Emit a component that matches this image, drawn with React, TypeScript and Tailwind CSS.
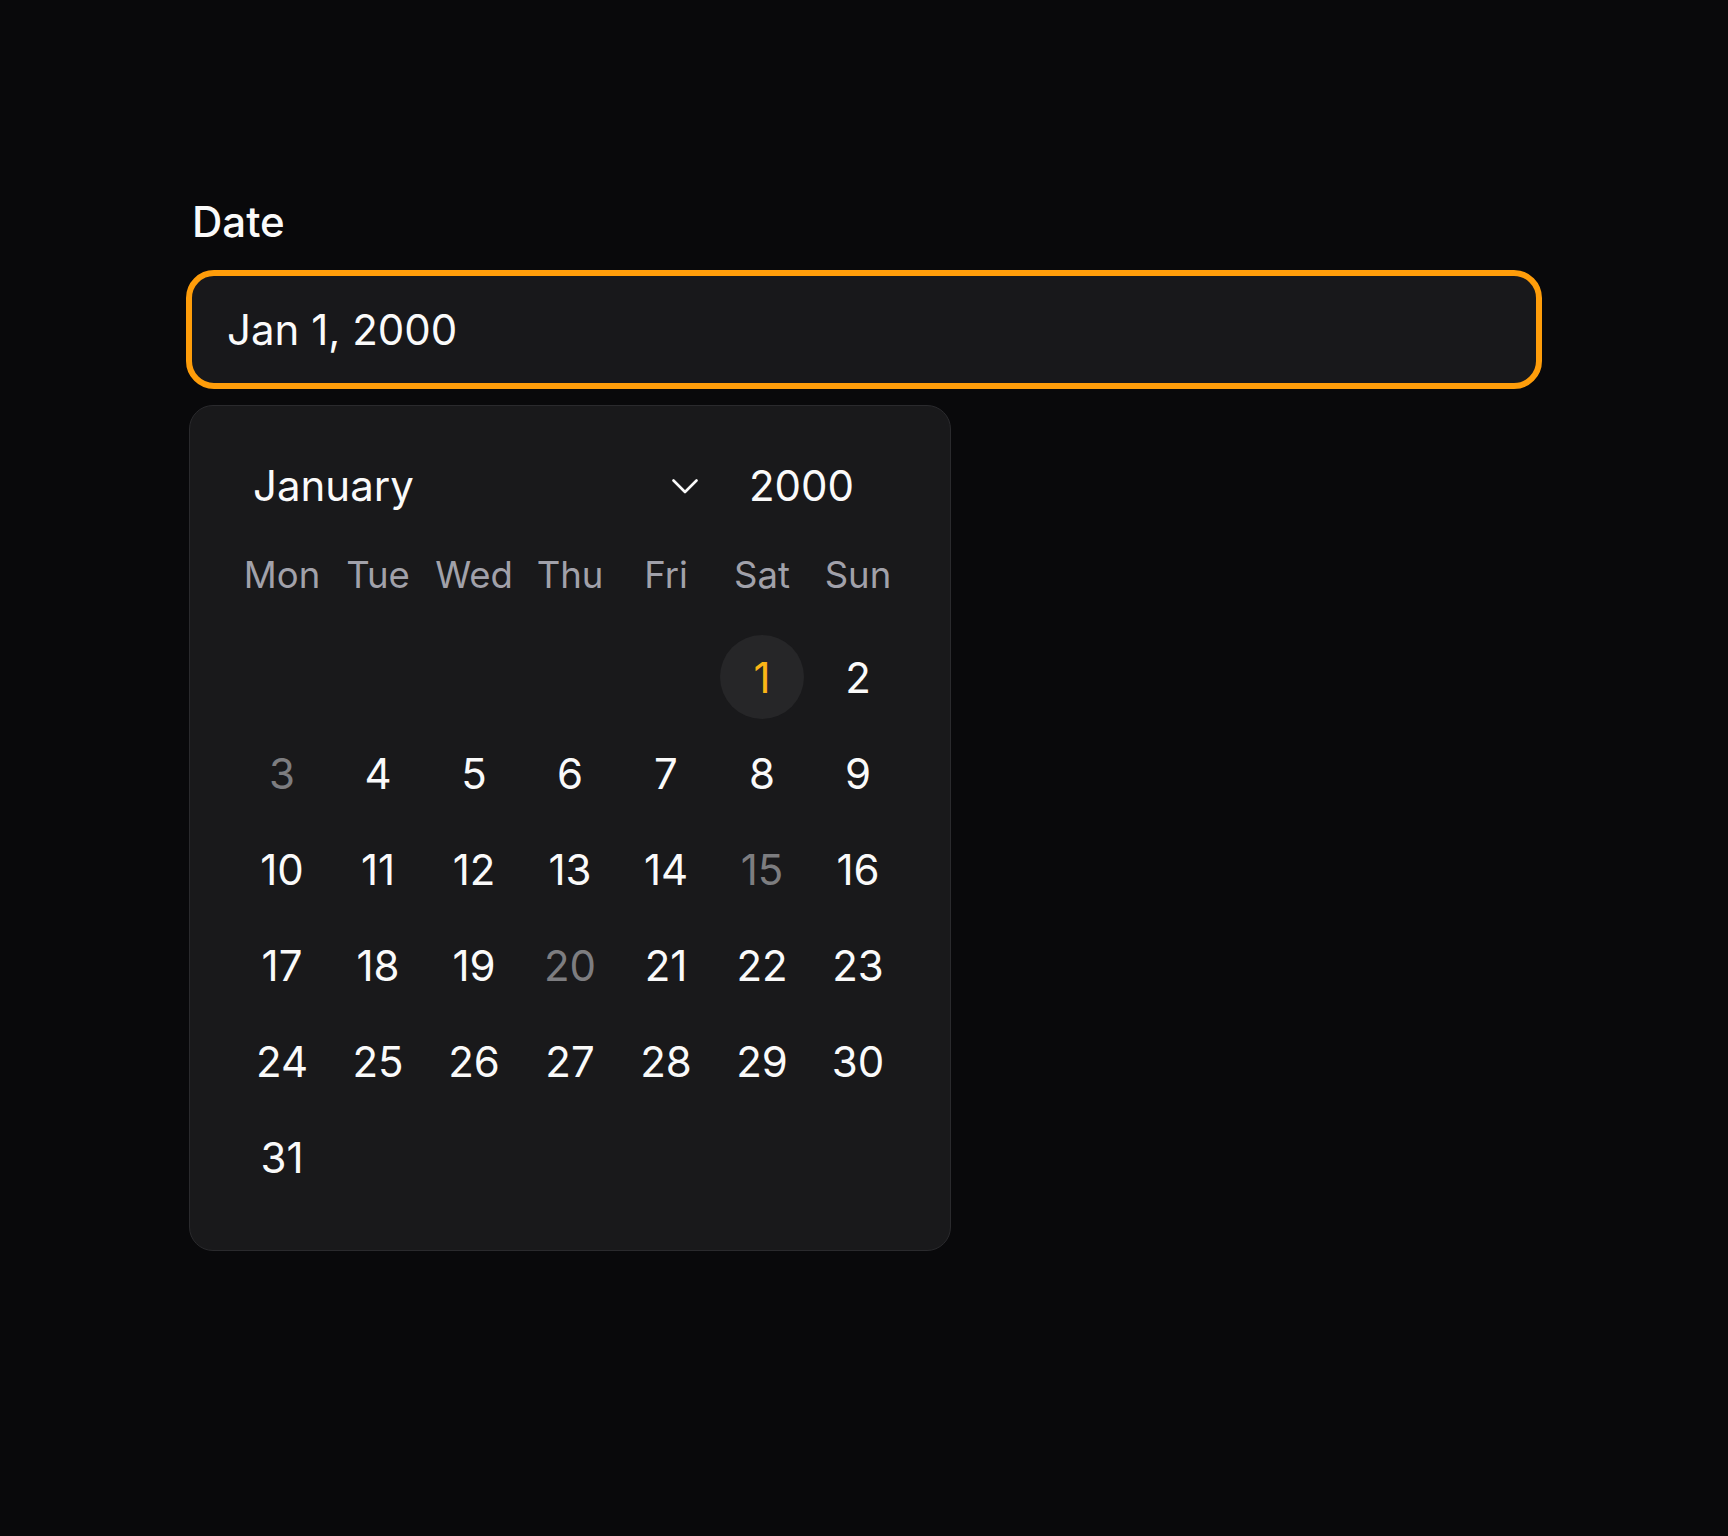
import React from "react";

const WEEKDAYS = ["Mon", "Tue", "Wed", "Thu", "Fri", "Sat", "Sun"];

// January 2000 starts on a Saturday (Mon-first grid → 5 leading blanks)
const LEADING = 5;
const DAYS_IN_MONTH = 31;
const SELECTED = 1;
const UNAVAILABLE = new Set([3, 15, 20]);

function ChevronDown() {
  return (
    <svg width="26" height="15" viewBox="0 0 26 15" fill="none" aria-hidden="true">
      <path
        d="M1.5 1.5 L13 13 L24.5 1.5"
        stroke="#fafafa"
        strokeWidth="2.6"
        strokeLinecap="round"
        strokeLinejoin="round"
      />
    </svg>
  );
}

function DayCell({ day }: { day: number | null }) {
  if (day === null) return <div className="h-[96px]" />;
  const selected = day === SELECTED;
  const unavailable = UNAVAILABLE.has(day);
  return (
    <div className="h-[96px] flex items-center justify-center">
      <div
        className={
          selected
            ? "w-[84px] h-[84px] rounded-full bg-[#262628] flex items-center justify-center text-[42px] text-[#fbb516]"
            : unavailable
            ? "w-[84px] h-[84px] rounded-full flex items-center justify-center text-[42px] text-[#7d7d80]"
            : "w-[84px] h-[84px] rounded-full flex items-center justify-center text-[42px] text-[#fafafa]"
        }
      >
        {day}
      </div>
    </div>
  );
}

export default function App() {
  const cells: (number | null)[] = [];
  for (let i = 0; i < LEADING; i++) cells.push(null);
  for (let d = 1; d <= DAYS_IN_MONTH; d++) cells.push(d);

  return (
    <div
      className="min-h-[1536px] w-full bg-[#09090b] pt-[198px] pl-[186px]"
      style={{ fontFamily: "Inter, 'Noto Sans', sans-serif" }}
    >
      <div className="w-[1356px]">
        <label className="block ml-[6px] h-[48px] leading-[48px] text-[42px] font-medium text-[#fafafa] mb-[24px]">
          Date
        </label>

        <div className="h-[119px] w-[1356px] rounded-[28px] border-[6px] border-[#ff9d0a] bg-[#18181b] flex items-center pl-[35px]">
          <span className="text-[42px] text-[#fafafa] leading-none">Jan 1, 2000</span>
        </div>

        <div className="mt-[16px] ml-[3px] w-[762px] rounded-[24px] border border-[#2a2a2d] bg-[#19191b] pt-[44px] pb-[45px] px-[44px]">
          <div className="h-[72px] flex items-center">
            <div className="w-[476px] flex items-center justify-between pl-[19px] pr-[12px]">
              <span className="text-[42px] text-[#fafafa] leading-none">January</span>
              <ChevronDown />
            </div>
            <span className="ml-[39px] text-[42px] text-[#fafafa] leading-none">2000</span>
          </div>

          <div className="grid grid-cols-7 w-[672px] h-[107px] items-center">
            {WEEKDAYS.map((w) => (
              <div key={w} className="text-center text-[36.5px] text-[#a1a1aa] leading-none">
                {w}
              </div>
            ))}
          </div>

          <div className="grid grid-cols-7 w-[672px]">
            {cells.map((d, i) => (
              <DayCell key={i} day={d} />
            ))}
          </div>
        </div>
      </div>
    </div>
  );
}
